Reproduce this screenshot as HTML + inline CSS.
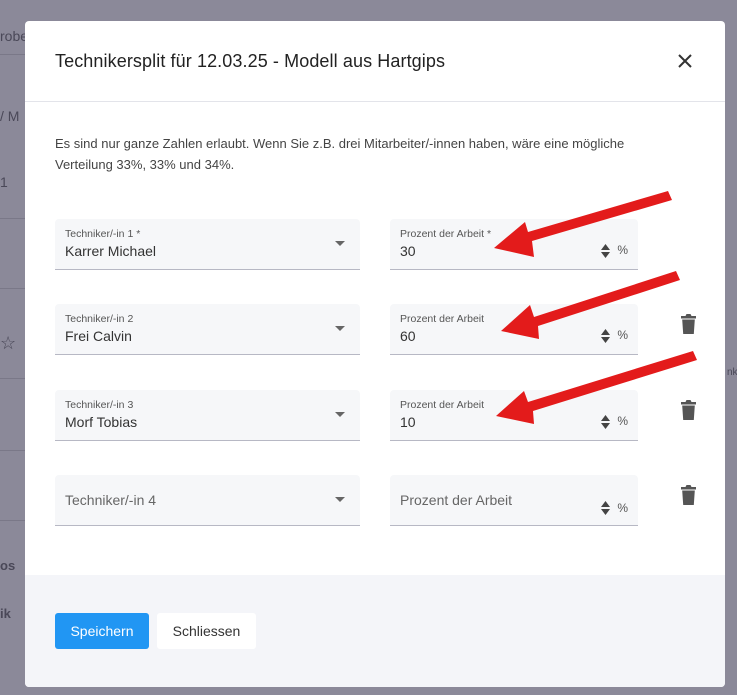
<!DOCTYPE html>
<html><head><meta charset="utf-8"><style>
*{margin:0;padding:0;box-sizing:border-box}
body{width:737px;height:695px;overflow:hidden;background:#8b8999;font-family:"Liberation Sans",sans-serif;position:relative}
.bgt{position:absolute;color:#4a4858;font-size:14px}
.bgl{position:absolute;height:1px;background:#7a7888}
.modal{position:absolute;left:25px;top:21px;width:700px;height:666px;background:#fff;border-radius:4px;overflow:hidden}
.hd{height:81px;border-bottom:1px solid #e3e4ea;position:relative}
.hd h1{position:absolute;left:30px;top:30px;font-size:18px;font-weight:normal;color:#222;letter-spacing:0.1px}
.x{position:absolute;left:651px;top:31px}
.info{position:absolute;left:30px;top:112px;font-size:13px;line-height:21px;color:#444;width:615px}
.f{position:absolute;background:#f6f7f9;border-bottom:1px solid #b7b8c4;border-radius:4px 4px 0 0;height:51px}
.f .l{position:absolute;left:10px;top:9px;font-size:10.5px;color:#555}
.f .v{position:absolute;left:10px;top:24px;font-size:14px;color:#333}
.f .p{position:absolute;left:10px;top:17px;font-size:14px;color:#666}
.dd{position:absolute;right:15px;top:22px;width:0;height:0;border-left:5px solid transparent;border-right:5px solid transparent;border-top:5px solid #666}
.sp{position:absolute;right:27px;top:23px}
.pc{position:absolute;right:10px;top:24px;font-size:12px;color:#555}
.tr{position:absolute;left:656px}
.ft{position:absolute;left:0;top:554px;width:700px;height:112px;background:#f4f5f9}
.b1{position:absolute;left:30px;top:592px;width:94px;height:36px;background:#2196f3;color:#fff;border-radius:3px;font-size:14px;text-align:center;line-height:36px}
.b2{position:absolute;left:132px;top:592px;width:99px;height:36px;background:#fff;color:#333;border-radius:3px;font-size:14px;text-align:center;line-height:36px}
</style></head><body>
<div class="bgt" style="left:0;top:28px">robe</div>
<div class="bgl" style="left:0;top:54px;width:25px"></div>
<div class="bgt" style="left:0;top:108px">/ M</div>
<div class="bgt" style="left:0;top:174px">1</div>
<div class="bgl" style="left:0;top:218px;width:25px"></div>
<div class="bgl" style="left:0;top:288px;width:25px"></div>
<div class="bgt" style="left:0;top:333px;font-size:18px">☆</div>
<div class="bgl" style="left:0;top:378px;width:25px"></div>
<div class="bgl" style="left:0;top:450px;width:25px"></div>
<div class="bgl" style="left:0;top:520px;width:25px"></div>
<div class="bgt" style="left:0;top:558px;font-weight:bold;font-size:13px">os</div>
<div class="bgt" style="left:0;top:606px;font-weight:bold;font-size:13px">ik</div>
<div class="bgt" style="left:727px;top:367px;font-size:10px">nk</div>
<div class="modal">
<div class="hd"><h1>Technikersplit für 12.03.25 - Modell aus Hartgips</h1>
<svg class="x" width="18" height="18" viewBox="0 0 18 18"><path d="M3 3L15 15M15 3L3 15" stroke="#333" stroke-width="2"/></svg></div>
<div class="info">Es sind nur ganze Zahlen erlaubt. Wenn Sie z.B. drei Mitarbeiter/-innen haben, wäre eine mögliche Verteilung 33%, 33% und 34%.</div>

<div class="f" style="left:30px;top:198px;width:305px"><div class="l">Techniker/-in 1 *</div><div class="v">Karrer Michael</div><div class="dd"></div></div>
<div class="f" style="left:365px;top:198px;width:248px"><div class="l">Prozent der Arbeit *</div><div class="v">30</div><svg class="sp" width="11" height="18"><path d="M1 8L5.5 2L10 8ZM1 10L5.5 16L10 10Z" fill="#444"/></svg><div class="pc">%</div></div>

<div class="f" style="left:30px;top:283px;width:305px"><div class="l">Techniker/-in 2</div><div class="v">Frei Calvin</div><div class="dd"></div></div>
<div class="f" style="left:365px;top:283px;width:248px"><div class="l">Prozent der Arbeit</div><div class="v">60</div><svg class="sp" width="11" height="18"><path d="M1 8L5.5 2L10 8ZM1 10L5.5 16L10 10Z" fill="#444"/></svg><div class="pc">%</div></div>

<div class="f" style="left:30px;top:369px;width:305px"><div class="l">Techniker/-in 3</div><div class="v">Morf Tobias</div><div class="dd"></div></div>
<div class="f" style="left:365px;top:369px;width:248px"><div class="l">Prozent der Arbeit</div><div class="v">10</div><svg class="sp" width="11" height="18"><path d="M1 8L5.5 2L10 8ZM1 10L5.5 16L10 10Z" fill="#444"/></svg><div class="pc">%</div></div>

<div class="f" style="left:30px;top:454px;width:305px"><div class="p">Techniker/-in 4</div><div class="dd" style="top:22px"></div></div>
<div class="f" style="left:365px;top:454px;width:248px"><div class="p">Prozent der Arbeit</div><svg class="sp" width="11" height="18" style="top:24px"><path d="M1 8L5.5 2L10 8ZM1 10L5.5 16L10 10Z" fill="#444"/></svg><div class="pc" style="top:26px">%</div></div>

<svg class="tr" style="top:293px" width="15" height="20" viewBox="0 0 15 20"><path d="M0 2H4.5L5.5 0H9.5L10.5 2H15V4.5H0Z M1.2 5.5H13.8L12.8 20H2.2Z" fill="#555"/></svg>
<svg class="tr" style="top:379px" width="15" height="20" viewBox="0 0 15 20"><path d="M0 2H4.5L5.5 0H9.5L10.5 2H15V4.5H0Z M1.2 5.5H13.8L12.8 20H2.2Z" fill="#555"/></svg>
<svg class="tr" style="top:464px" width="15" height="20" viewBox="0 0 15 20"><path d="M0 2H4.5L5.5 0H9.5L10.5 2H15V4.5H0Z M1.2 5.5H13.8L12.8 20H2.2Z" fill="#555"/></svg>

<div class="ft"></div>
<div class="b1">Speichern</div>
<div class="b2">Schliessen</div>
</div>
<svg style="position:absolute;left:0;top:0" width="737" height="695">
<g fill="#e31b1b">
<polygon points="668,191 672,200 532,241 534,257 494,248 525,222 528,232"/>
<polygon points="676,271 680,280 538,326 539,339 501,331 530,305 534,317"/>
<polygon points="693,351 697,360 533,411 534,424 496,416 524,391 528,402"/>
</g></svg>
</body></html>
